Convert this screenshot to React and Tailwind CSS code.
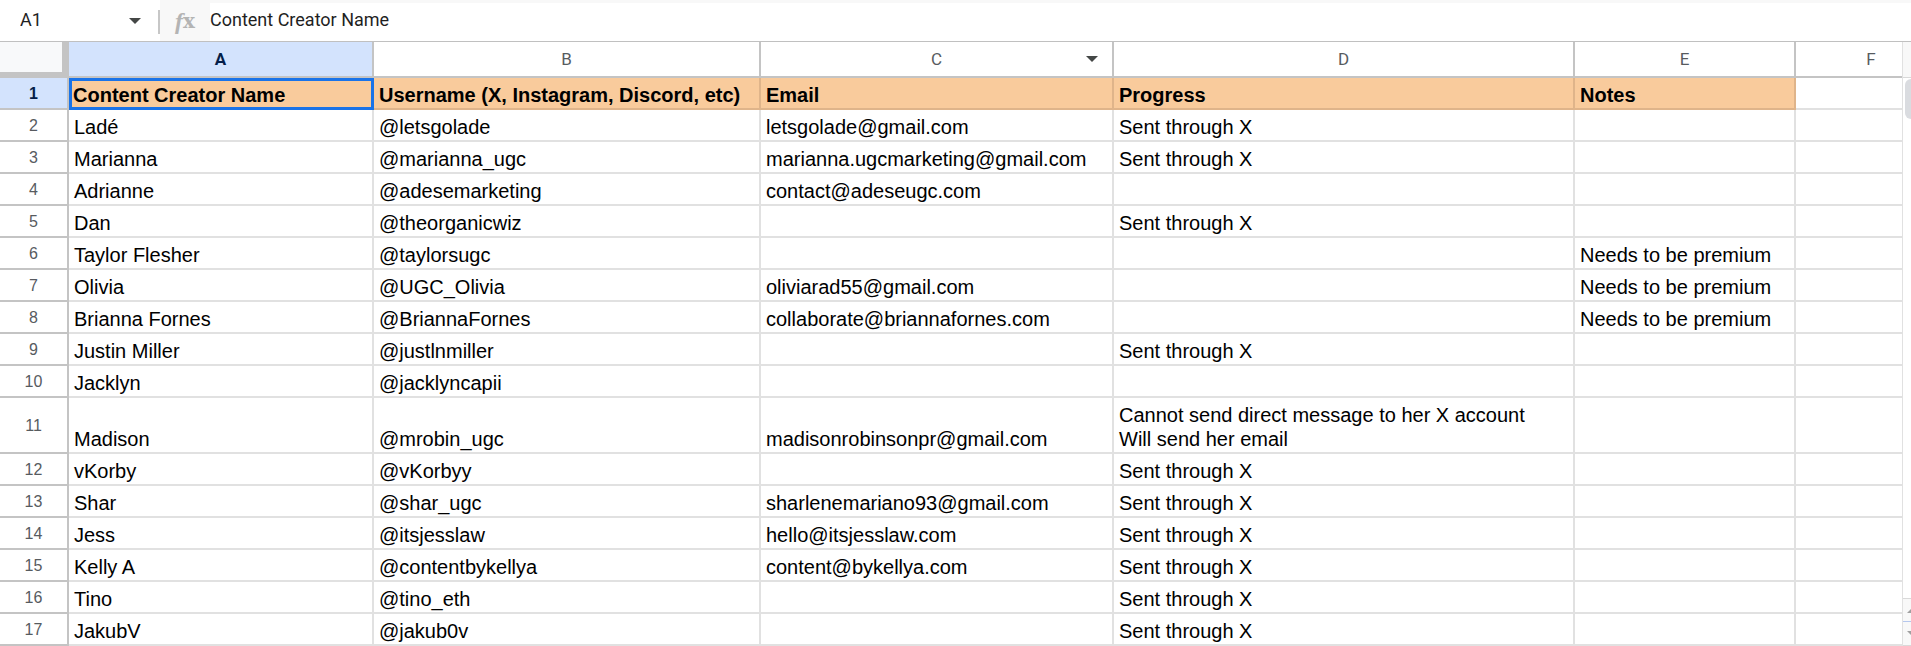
const columns = [
  { id: 'A', className: 'w-[305px]' },
  { id: 'B', className: 'w-[387px]' },
  { id: 'C', className: 'w-[353px]', menu: true },
  { id: 'D', className: 'w-[461px]' },
  { id: 'E', className: 'w-[221px]' },
  { id: 'F', className: '' },
];

const titles = ['Content Creator Name', 'Username (X, Instagram, Discord, etc)', 'Email', 'Progress', 'Notes'];

const sent = 'Sent through X';
const premium = 'Needs to be premium';

const rows = [
  ['Ladé', '@letsgolade', 'letsgolade@gmail.com', sent, ''],
  ['Marianna', '@marianna_ugc', 'marianna.ugcmarketing@gmail.com', sent, ''],
  ['Adrianne', '@adesemarketing', 'contact@adeseugc.com', '', ''],
  ['Dan', '@theorganicwiz', '', sent, ''],
  ['Taylor Flesher', '@taylorsugc', '', '', premium],
  ['Olivia', '@UGC_Olivia', 'oliviarad55@gmail.com', '', premium],
  ['Brianna Fornes', '@BriannaFornes', 'collaborate@briannafornes.com', '', premium],
  ['Justin Miller', '@justlnmiller', '', sent, ''],
  ['Jacklyn', '@jacklyncapii', '', '', ''],
  ['Madison', '@mrobin_ugc', 'madisonrobinsonpr@gmail.com', 'Cannot send direct message to her X account\nWill send her email', ''],
  ['vKorby', '@vKorbyy', '', sent, ''],
  ['Shar', '@shar_ugc', 'sharlenemariano93@gmail.com', sent, ''],
  ['Jess', '@itsjesslaw', 'hello@itsjesslaw.com', sent, ''],
  ['Kelly A', '@contentbykellya', 'content@bykellya.com', sent, ''],
  ['Tino', '@tino_eth', '', sent, ''],
  ['JakubV', '@jakub0v', '', sent, ''],
];

function Caret() {
  return (
    <svg width="12" height="6" viewBox="0 0 12 6" className="fill-[#444746]" aria-hidden="true">
      <path d="M0 0h12L6 6z" />
    </svg>
  );
}

function FormulaBar() {
  return (
    <div className="flex h-[42px] border-b border-[#c0c0c0] font-[Roboto,sans-serif] text-[18px] leading-6 text-[#1f1f1f]">
      <div className="flex w-[160px] items-center justify-between pl-5">
        <input aria-label="Name box" defaultValue="A1" className="mb-[2px] w-20 outline-none" />
        <div className="flex items-center gap-[17px]">
          <button type="button" aria-label="Named ranges">
            <Caret />
          </button>
          <span className="mt-[2px] h-6 w-[2px] bg-[#c7c7c7]" />
        </div>
      </div>
      <div className="flex w-[50px] items-center justify-center bg-[#f8f8f8] leading-6 text-[#b4b4b4]">
        <span className="font-['Liberation_Serif',serif] text-[24px] font-bold italic">f</span>
        <span className="font-['DejaVu_Serif',serif] text-[20px] font-bold">x</span>
      </div>
      <div className="flex flex-1 items-center border-t-[3px] border-[#f8f8f8] pb-1">
        <input
          aria-label="Formula"
          defaultValue="Content Creator Name"
          className="w-full outline-none"
        />
      </div>
    </div>
  );
}

function Sheet() {
  return (
    <table className="flex-1 table-fixed border-separate border-spacing-0 font-['Liberation_Sans',Arial,sans-serif] text-[20px] leading-6 text-black">
      <colgroup>
        <col className="w-[69px]" />
        {columns.map((c) => (
          <col key={c.id} className={c.className} />
        ))}
      </colgroup>
      <thead>
        <tr className="h-9 font-[Roboto,sans-serif] text-[17px] leading-5 text-[#575b5f]">
          <td className="border-r-[7px] border-b-[6px] border-[#c4c4c4] bg-[#f8f9fa]" />
          {columns.map((c) => (
            <th
              key={c.id}
              scope="col"
              className={
                c.id === 'A'
                  ? 'border-r-2 border-b-2 border-[#c4c4c4] bg-[#d3e3fd] font-bold text-[#041e49]'
                  : 'border-r-2 border-b-2 border-[#c4c4c4] font-normal last:border-r-0 last:pl-11'
              }
            >
              {c.menu ? (
                <div className="relative">
                  {c.id}
                  <button type="button" aria-label="Column menu" className="absolute inset-y-0 right-[14px]">
                    <Caret />
                  </button>
                </div>
              ) : (
                c.id
              )}
            </th>
          ))}
        </tr>
      </thead>
      <tbody>
        <tr className="h-8">
          <th scope="row" className="border-r-2 border-b-2 border-[#c4c4c4] bg-[#d3e3fd] pt-[1px] text-[16px] leading-5 text-[#041e49]">
            1
          </th>
          {titles.map((t, i) => (
            <td
              key={t}
              className={
                i === 0
                  ? 'bg-[#f9cb9c] pt-1 pr-1 pb-[2px] pl-1 font-bold outline-3 -outline-offset-3 outline-[#1a73e8]'
                  : 'border-r-2 border-b-2 border-[#dfb48a] bg-[#f9cb9c] pt-1 pl-[5px] font-bold whitespace-nowrap'
              }
            >
              {t}
            </td>
          ))}
          <td className="border-b-2 border-[#e1e1e1]" />
        </tr>
        {rows.map((cells, i) => (
          <tr key={cells[0]} className="h-8">
            <th scope="row" className="border-r-2 border-b-2 border-[#c4c4c4] pt-[2px] text-[16px] leading-5 font-normal text-[#575b5f]">
              {i + 2}
            </th>
            {cells.map((text, j) => (
              <td key={j} className="border-r-2 border-b-2 border-[#e1e1e1] pt-[5px] pb-[1px] pl-[5px] align-bottom whitespace-pre">
                {text}
              </td>
            ))}
            <td className="border-b-2 border-[#e1e1e1]" />
          </tr>
        ))}
      </tbody>
    </table>
  );
}

function ScrollBar() {
  return (
    <div className="flex w-[9px] flex-col overflow-hidden border-l border-[#e1e1e1]">
      <div className="h-9 border-b border-[#d9d9d9] bg-[#f8f8f8]" />
      <div className="flex-1 pt-[1px] pl-[2px]">
        <div className="h-10 w-3 rounded-md bg-[#dadce0]" />
      </div>
      <button type="button" aria-label="Scroll up" className="flex h-6 w-6 items-center border-t border-b border-t-[#d9d9d9] border-b-[#b5c7ee] bg-[#f8f8f8] pl-1">
        <svg width="10" height="5" viewBox="0 0 10 5" className="fill-[#a0a0a0]" aria-hidden="true">
          <path d="M0 5h10L5 0z" />
        </svg>
      </button>
      <button type="button" aria-label="Scroll down" className="flex h-6 w-6 items-center border-b border-[#d9d9d9] bg-[#f8f8f8] pl-1">
        <svg width="10" height="5" viewBox="0 0 10 5" className="fill-[#a0a0a0]" aria-hidden="true">
          <path d="M0 0h10L5 5z" />
        </svg>
      </button>
    </div>
  );
}

export default function App() {
  return (
    <main className="overflow-hidden bg-white">
      <FormulaBar />
      <div className="flex">
        <Sheet />
        <ScrollBar />
      </div>
    </main>
  );
}
